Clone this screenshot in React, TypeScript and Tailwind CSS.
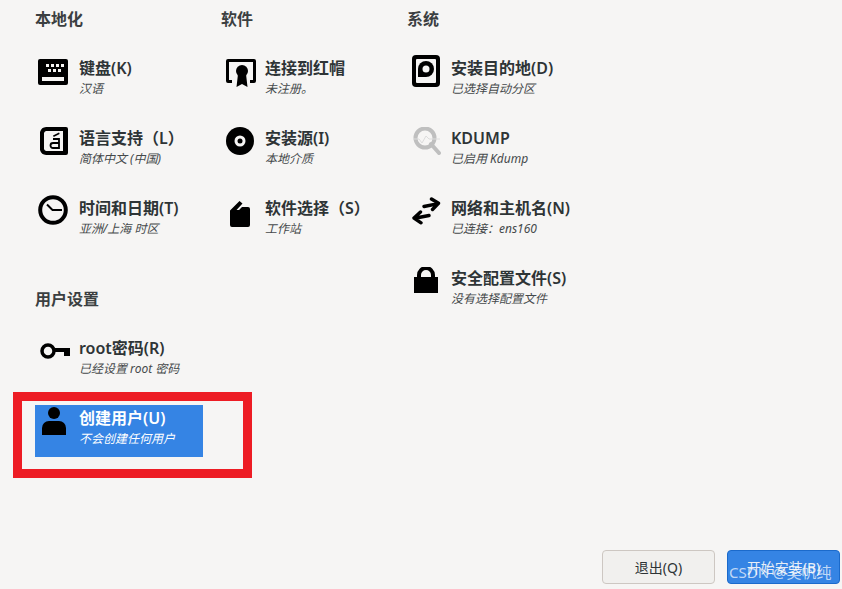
import type { ReactNode } from "react";

const FONT = "font-['Noto_Sans','Noto_Sans_CJK_SC',sans-serif]";

// ── Icons ────────────────────────────────────────────────────────────
function KeyboardIcon() {
  return (
    <svg width="30" height="26" viewBox="0 0 30 26" className="block">
      <rect x="0" y="0" width="30" height="26" rx="2" fill="#000" />
      <g fill="#f6f5f4">
        <rect x="8" y="5" width="3" height="3" />
        <rect x="13" y="5" width="3" height="3" />
        <rect x="18" y="5" width="3" height="3" />
        <rect x="23" y="5" width="3" height="3" />
        <rect x="10" y="10" width="3" height="3" />
        <rect x="15" y="10" width="3" height="3" />
        <rect x="20" y="10" width="3" height="3" />
        <rect x="4" y="18" width="22" height="4" />
      </g>
    </svg>
  );
}

function LanguageIcon() {
  return (
    <svg width="28" height="28" viewBox="0 0 28 28" className="block">
      <path d="M7 0h19a2 2 0 0 1 2 2v24a2 2 0 0 1-2 2H7a7 7 0 0 1-7-5V5a7 7 0 0 1 7-5z" fill="#000" />
      <path d="M6 4h17v20H6a3 3 0 0 1-2-2V6a3 3 0 0 1 2-2z" fill="#f6f5f4" />
      <path d="M13 8.500l6-3 .7 1.500-6 3z" fill="#000" />
      <path d="M13 12h6v9h-6a1 1 0 0 1 0-5h6" fill="none" stroke="#000" strokeWidth="1.800" />
    </svg>
  );
}

function ClockIcon() {
  return (
    <svg width="30" height="30" viewBox="0 0 30 30" className="block">
      <circle cx="15" cy="15" r="12.800" fill="none" stroke="#000" strokeWidth="4" />
      <path d="M9 9.500l5.500 5.500H24" fill="none" stroke="#000" strokeWidth="2" />
    </svg>
  );
}

function RedHatIcon() {
  return (
    <svg width="30" height="28" viewBox="0 0 30 28" className="block">
      <path d="M2 0h26a2 2 0 0 1 2 2v20a2 2 0 0 1-2 2h-4v-3h3V3H3v18h3v3H2a2 2 0 0 1-2-2V2a2 2 0 0 1 2-2z" fill="#000" />
      <circle cx="16" cy="12" r="6" fill="#000" />
      <path d="M12 15h8l1.500 13-5.500-3-5.500 3z" fill="#000" />
    </svg>
  );
}

function DiscIcon() {
  return (
    <svg width="28" height="28" viewBox="0 0 28 28" className="block">
      <circle cx="14" cy="14" r="14" fill="#000" />
      <circle cx="14" cy="14" r="5.500" fill="#f6f5f4" />
      <circle cx="14" cy="14" r="2.500" fill="#000" />
    </svg>
  );
}

function PackageIcon() {
  return (
    <svg width="20" height="26" viewBox="0 0 20 26" className="block">
      <path d="M0 9.500L9.500 0l3 2.500L6.500 9H9l3-3h6a2 2 0 0 1 2 2v16a2 2 0 0 1-2 2H2a2 2 0 0 1-2-2z" fill="#000" />
    </svg>
  );
}

function DiskIcon() {
  return (
    <svg width="28" height="32" viewBox="0 0 28 32" className="block">
      <rect x="0" y="0" width="28" height="32" rx="4" fill="#000" />
      <rect x="4" y="4" width="20" height="24" rx="1" fill="#f6f5f4" />
      <path d="M14 6a8 8 0 0 1 8 8 8 8 0 0 1-8 8H6v-8a8 8 0 0 1 8-8z" fill="#000" />
      <circle cx="14" cy="14" r="3.500" fill="#f6f5f4" />
    </svg>
  );
}

function KdumpIcon() {
  return (
    <svg width="28" height="28" viewBox="0 0 28 28" className="block">
      <circle cx="12" cy="11" r="9.500" fill="none" stroke="#bfbfbf" strokeWidth="4" />
      <path d="M18 17l8 9" stroke="#bfbfbf" strokeWidth="4" strokeLinecap="round" />
      <path d="M0 12h6l3 4 4-7 3 3h11" fill="none" stroke="#dcdcdc" strokeWidth="1" />
    </svg>
  );
}

function NetworkIcon() {
  return (
    <svg width="30" height="28" viewBox="0 0 30 28" className="block">
      <path d="M13 9.500L26 6.800M20.500 2L27.500 6.300 21.500 12.500M18 18.500L5 21M9.500 15L3 21 10 25.800" fill="none" stroke="#000" strokeWidth="3.400" strokeLinecap="round" strokeLinejoin="round" />
    </svg>
  );
}

function LockIcon() {
  return (
    <svg width="24" height="26" viewBox="0 0 24 26" className="block">
      <path d="M5 11V8a7 7 0 0 1 14 0v3" fill="none" stroke="#000" strokeWidth="4" />
      <rect x="0" y="10" width="24" height="16" fill="#000" />
    </svg>
  );
}

function KeyIcon() {
  return (
    <svg width="30" height="16" viewBox="0 0 30 16" className="block">
      <circle cx="8" cy="8" r="6" fill="none" stroke="#000" strokeWidth="3.500" />
      <path d="M14 5h16v8h-6V9H14z" fill="#000" />
    </svg>
  );
}

function UserIcon() {
  return (
    <svg width="24" height="28" viewBox="0 0 24 28" className="block">
      <circle cx="12" cy="6" r="6" fill="#000" />
      <path d="M0 28V21a7 7 0 0 1 7-7h10a7 7 0 0 1 7 7v7z" fill="#000" />
    </svg>
  );
}

// ── Spoke tile ───────────────────────────────────────────────────────
function Spoke({ icon, iconClass, title, status, selected }: { icon: ReactNode; iconClass: string; title: string; status: string; selected?: boolean }) {
  return (
    <div className={`flex h-[52px] w-[168px] ${selected ? "bg-[#3584e4]" : ""}`}>
      <div className="w-[44px] shrink-0">
        <div className={iconClass}>{icon}</div>
      </div>
      <div className="min-w-0 whitespace-nowrap pt-[1px]">
        <div className={`text-[16px] leading-[24px] font-semibold ${selected ? "text-white" : "text-[#2e3436]"}`}>{title}</div>
        <div className={`mt-[1px] text-[12px] leading-[16px] italic ${selected ? "text-white" : "text-[#45494b]"}`}>{status}</div>
      </div>
    </div>
  );
}

function Section({ title, children }: { title: string; children: ReactNode }) {
  return (
    <section>
      <h2 className="h-[20px] text-[16px] leading-[20px] font-semibold text-[#3b3f41]">{title}</h2>
      <div className="mt-[26px] flex flex-col gap-[18px]">{children}</div>
    </section>
  );
}

export default function App() {
  return (
    <div className={`relative flex h-[589px] w-[842px] flex-col overflow-hidden bg-[#f6f5f4] ${FONT}`}>
      <main className="flex flex-1 pl-[35px] pt-[9px]">
        <div className="flex w-[186px] flex-col gap-[42px]">
          <Section title="本地化">
            <Spoke icon={<KeyboardIcon />} iconClass="ml-[3px] mt-[4px]" title="键盘(K)" status="汉语" />
            <Spoke icon={<LanguageIcon />} iconClass="ml-[5px] mt-[2px]" title="语言支持（L）" status="简体中文 (中国)" />
            <Spoke icon={<ClockIcon />} iconClass="ml-[3px]" title="时间和日期(T)" status="亚洲/上海 时区" />
          </Section>
          <Section title="用户设置">
            <Spoke icon={<KeyIcon />} iconClass="ml-[5px] mt-[8px]" title="root密码(R)" status="已经设置 root 密码" />
            <Spoke icon={<UserIcon />} iconClass="ml-[7px] mt-[2px]" title="创建用户(U)" status="不会创建任何用户" selected />
          </Section>
        </div>
        <div className="w-[186px]">
          <Section title="软件">
            <Spoke icon={<RedHatIcon />} iconClass="ml-[5px] mt-[4px]" title="连接到红帽" status="未注册。" />
            <Spoke icon={<DiscIcon />} iconClass="ml-[5px] mt-[2px]" title="安装源(I)" status="本地介质" />
            <Spoke icon={<PackageIcon />} iconClass="ml-[9px] mt-[6px]" title="软件选择（S）" status="工作站" />
          </Section>
        </div>
        <div className="w-[186px]">
          <Section title="系统">
            <Spoke icon={<DiskIcon />} iconClass="ml-[5px]" title="安装目的地(D)" status="已选择自动分区" />
            <Spoke icon={<KdumpIcon />} iconClass="ml-[6px] mt-[2px]" title="KDUMP" status="已启用 Kdump" />
            <Spoke icon={<NetworkIcon />} iconClass="ml-[4px] mt-[2px]" title="网络和主机名(N)" status="已连接：ens160" />
            <Spoke icon={<LockIcon />} iconClass="ml-[7px] mt-[2px]" title="安全配置文件(S)" status="没有选择配置文件" />
          </Section>
        </div>
      </main>

      {/* ── Bottom buttons ────────────────────────────────────── */}
      <footer className="flex justify-end gap-[12px] pr-[2px] pb-[5px]">
        <button className="h-[34px] w-[113px] rounded-[4px] border border-[#cdc7c2] bg-[#f1f0ee] text-[14px] text-[#2e3436]">退出(Q)</button>
        <button className="h-[34px] w-[113px] rounded-[4px] border border-[#1b6acb] bg-[#3584e4] text-[14px] text-[#e8eef6]">开始安装(B)</button>
      </footer>

      {/* annotation + watermark painted over the screenshot */}
      <div className="absolute left-[13px] top-[392px] h-[86px] w-[239px] border-[9px] border-[#ed1c24]" />
      <div className="absolute left-[729px] top-[562px] text-[15px] leading-[20px] whitespace-nowrap text-white/70">CSDN @吴帆纯</div>
    </div>
  );
}
